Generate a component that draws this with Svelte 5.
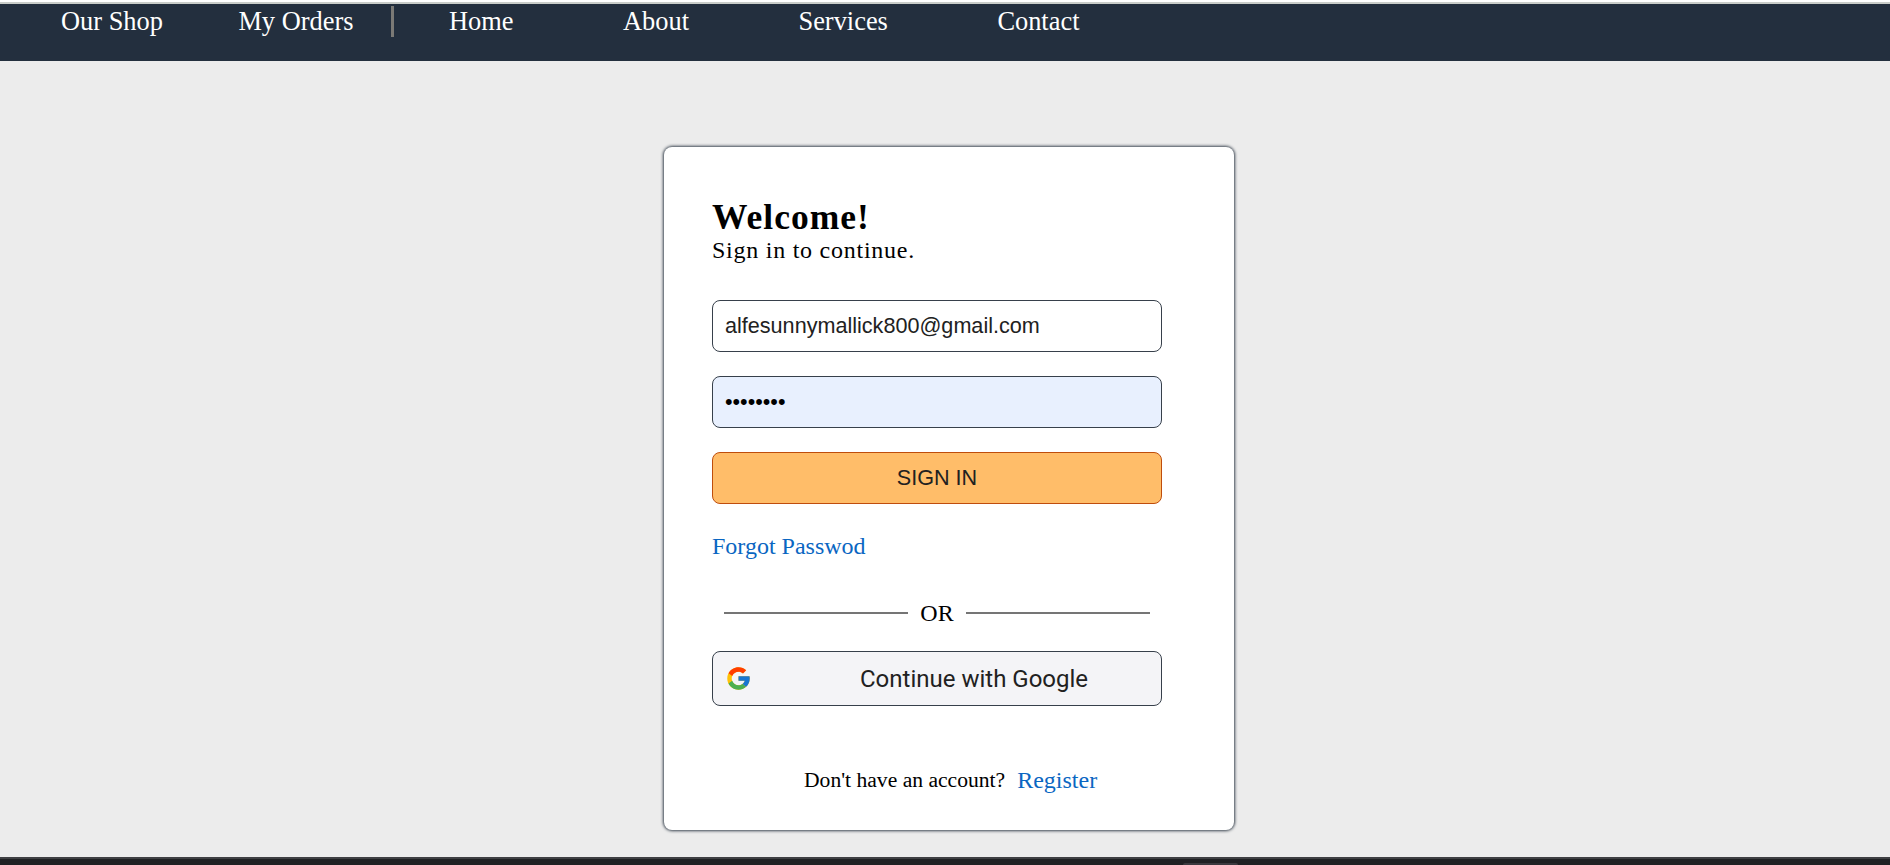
<script>
  const shopLinks = ['Our Shop', 'My Orders'];
  const siteLinks = ['Home', 'About', 'Services', 'Contact'];
  let email = $state('alfesunnymallick800@gmail.com');
  let password = $state('password');
</script>

<div class="page">
  <header>
    <nav class="shop">
      {#each shopLinks as label}<a href="#top">{label}</a>{/each}
    </nav>
    <nav class="site">
      {#each siteLinks as label}<a href="#top">{label}</a>{/each}
    </nav>
  </header>

  <main>
    <section class="card">
      <h1>Welcome!</h1>
      <p class="sub">Sign in to continue.</p>
      <form onsubmit={(e) => e.preventDefault()}>
        <input type="text" bind:value={email} aria-label="Email" />
        <input class="filled" type="password" bind:value={password} aria-label="Password" />
        <button class="signin">SIGN IN</button>
      </form>
      <a class="link forgot" href="#top">Forgot Passwod</a>
      <div class="or"><span>OR</span></div>
      <button class="google">
        <svg viewBox="0 0 48 48" aria-hidden="true">
          <path fill="#FFC107" d="M43.611 20.083H42V20H24v8h11.303C33.654 32.657 29.223 36 24 36c-6.627 0-12-5.373-12-12s5.373-12 12-12c3.059 0 5.842 1.154 7.961 3.039l5.657-5.657C34.046 6.053 29.268 4 24 4 12.955 4 4 12.955 4 24s8.955 20 20 20 20-8.955 20-20c0-1.341-.138-2.65-.389-3.917z" />
          <path fill="#FF3D00" d="M6.306 14.691l6.571 4.819C14.655 15.108 18.961 12 24 12c3.059 0 5.842 1.154 7.961 3.039l5.657-5.657C34.046 6.053 29.268 4 24 4 16.318 4 9.656 8.337 6.306 14.691z" />
          <path fill="#4CAF50" d="M24 44c5.166 0 9.86-1.977 13.409-5.192l-6.19-5.238C29.211 35.091 26.715 36 24 36c-5.202 0-9.619-3.317-11.283-7.946l-6.522 5.025C9.505 39.556 16.227 44 24 44z" />
          <path fill="#1976D2" d="M43.611 20.083H42V20H24v8h11.303c-.792 2.237-2.231 4.166-4.087 5.571l.003-.002 6.19 5.238C36.971 39.205 44 34 44 24c0-1.341-.138-2.65-.389-3.917z" />
        </svg>
        <span>Continue with Google</span>
      </button>
      <p class="register"><span>Don't have an account?</span><a class="link" href="#top">Register</a></p>
    </section>
  </main>

  <footer><i></i></footer>
</div>

<style>
  .page {
    height: 865px;
    box-sizing: border-box;
    display: flex;
    flex-direction: column;
    overflow: hidden;
    background: #ececec;
    border-top: 2px solid #fff;
    font-family: "Liberation Serif", "Times New Roman", serif;
    color: #000;
  }
  a { text-decoration: none; }
  h1, p { margin: 0; }
  header {
    height: 59px;
    flex: none;
    box-sizing: border-box;
    border-top: 2px solid #c9cdc9;
    background: #232f3e;
    display: flex;
    align-items: flex-start;
    padding: 2px 0 0 61px;
  }
  header a {
    color: #fff;
    font-size: 26.4px;
    line-height: 31px;
  }
  .shop {
    display: flex;
    gap: 75.5px;
    padding-right: 37.5px;
    border-right: 3px solid #7b7a76;
  }
  .site {
    display: flex;
    gap: 109.5px;
    padding-left: 55px;
  }
  main { flex: 1; padding: 86px 0 0 664px; }
  .card {
    box-sizing: border-box;
    width: 570px;
    height: 683px;
    padding: 49px 72px 0 48px;
    display: flex;
    flex-direction: column;
    background: #fff;
    border-radius: 8px;
    box-shadow: 0 0 3px 1px #39434f;
  }
  h1 {
    font-size: 35.5px;
    line-height: 42px;
    letter-spacing: 1px;
  }
  .sub {
    font-size: 24px;
    line-height: 28px;
    letter-spacing: 0.75px;
    margin-top: -2px;
  }
  form {
    display: flex;
    flex-direction: column;
    gap: 24px;
    margin-top: 36px;
  }
  input, button {
    box-sizing: border-box;
    width: 450px;
    height: 52px;
    margin: 0;
    border: 1px solid #37404b;
    border-radius: 8px;
    font: 21.6px/24px "Liberation Sans", Arial, sans-serif;
    color: #212121;
    outline: none;
  }
  input { padding: 0 12px; background: #fff; }
  .filled { background: #e8f0fe; color: #000; }
  .signin { background: #ffbd69; border-color: #bf4d0c; }
  .link { color: #0a66c2; font-size: 24px; line-height: 28px; }
  .forgot { margin-top: 28px; align-self: flex-start; }
  .or {
    display: flex;
    align-items: center;
    gap: 12px;
    margin: 39px 12px 0;
    font-size: 24px;
    line-height: 28px;
  }
  .or::before, .or::after {
    content: "";
    flex: 1;
    height: 2px;
    background: #757575;
  }
  .google {
    display: flex;
    align-items: center;
    height: 55px;
    margin-top: 24px;
    padding: 0 0 0 12px;
    background: #f4f4f7;
    font: 24px/28px Roboto, sans-serif;
  }
  .google svg { width: 27px; height: 27px; }
  .google span { margin-left: 108px; }
  .register {
    display: flex;
    align-items: flex-start;
    gap: 12px;
    margin: 60px 0 0 92px;
    font-size: 21.6px;
    line-height: 28px;
    white-space: nowrap;
  }
  footer {
    flex: none;
    height: 8px;
    box-sizing: border-box;
    border-top: 2px solid #3f4043;
    background: #202124;
    padding-left: 1183px;
    display: flex;
    align-items: flex-end;
  }
  footer i {
    width: 55px;
    height: 2px;
    background: #3b3a3f;
    border-radius: 4px 4px 0 0;
  }
</style>
